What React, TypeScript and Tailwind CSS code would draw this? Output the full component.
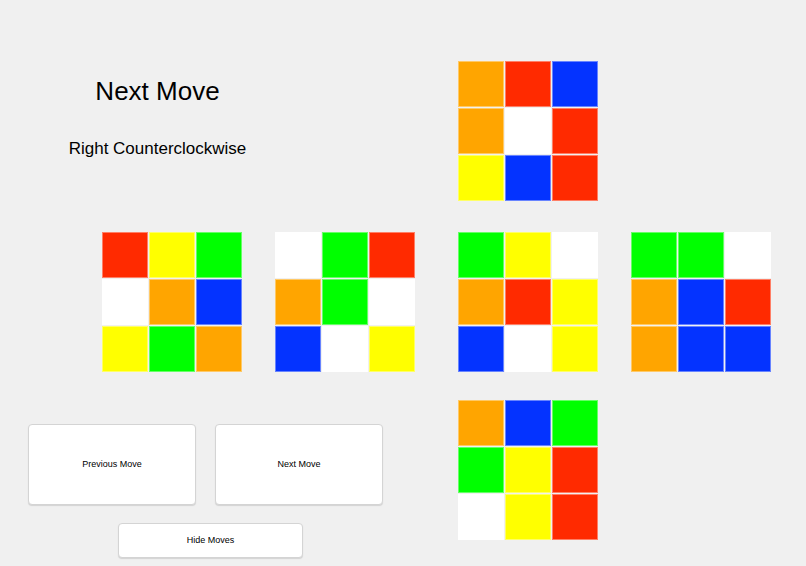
import React from 'react';

type Color = 'o' | 'r' | 'b' | 'w' | 'y' | 'g';

const colorClass: Record<Color, string> = {
  o: 'bg-[#ffa500]',
  r: 'bg-[#ff2a00]',
  b: 'bg-[#0433ff]',
  w: 'bg-white',
  y: 'bg-[#ffff00]',
  g: 'bg-[#00ff00]',
};

const faces: Record<string, Color[]> = {
  up: ['o', 'r', 'b', 'o', 'w', 'r', 'y', 'b', 'r'],
  left: ['r', 'y', 'g', 'w', 'o', 'b', 'y', 'g', 'o'],
  front: ['w', 'g', 'r', 'o', 'g', 'w', 'b', 'w', 'y'],
  right: ['g', 'y', 'w', 'o', 'r', 'y', 'b', 'w', 'y'],
  back: ['g', 'g', 'w', 'o', 'b', 'r', 'o', 'b', 'b'],
  down: ['o', 'b', 'g', 'g', 'y', 'r', 'w', 'y', 'r'],
};

const Face: React.FC<{ stickers: Color[]; className?: string }> = ({ stickers, className = '' }) => {
  return (
    <div className={`grid grid-cols-[46px_46px_46px] grid-rows-[46px_46px_46px] gap-[1px] shrink-0 ${className}`}>
      {stickers.map((c, i) => (
        <div key={`s-${i}`} className={`${colorClass[c]} border border-white/40`} />
      ))}
    </div>
  );
};

const MoveButton: React.FC<{ label: string; className: string }> = ({ label, className }) => {
  return (
    <button
      className={`bg-white border border-[#d4d4d4] rounded-[4px] shadow-[0_1px_1px_rgba(0,0,0,0.12)] text-[9px] text-black ${className}`}
    >
      {label}
    </button>
  );
};

export default function App() {
  return (
    <div className="w-[806px] h-[566px] bg-[#f0f0f0] overflow-hidden font-['Liberation_Sans',Arial,sans-serif] pt-[61px]">
      {/* top row: move info + up face */}
      <div className="flex">
        <div className="w-[315px] flex flex-col items-center text-black">
          <div className="mt-[16px] text-[26px] leading-[28px]">Next Move</div>
          <div className="mt-[34px] text-[17px] leading-[20px]">Right Counterclockwise</div>
        </div>
        <Face stickers={faces.up} className="ml-[143px]" />
      </div>

      {/* middle row */}
      <div className="flex mt-[31px] pl-[102px]">
        <Face stickers={faces.left} />
        <Face stickers={faces.front} className="ml-[33px]" />
        <Face stickers={faces.right} className="ml-[43px]" />
        <Face stickers={faces.back} className="ml-[33px]" />
      </div>

      {/* bottom row: buttons + down face */}
      <div className="flex mt-[28px]">
        <div className="w-[458px] flex flex-col pl-[28px] pt-[24px]">
          <div className="flex gap-[19px]">
            <MoveButton label="Previous Move" className="w-[168px] h-[81px]" />
            <MoveButton label="Next Move" className="w-[168px] h-[81px]" />
          </div>
          <MoveButton label="Hide Moves" className="w-[185px] h-[35px] mt-[18px] ml-[90px]" />
        </div>
        <Face stickers={faces.down} />
      </div>
    </div>
  );
}
